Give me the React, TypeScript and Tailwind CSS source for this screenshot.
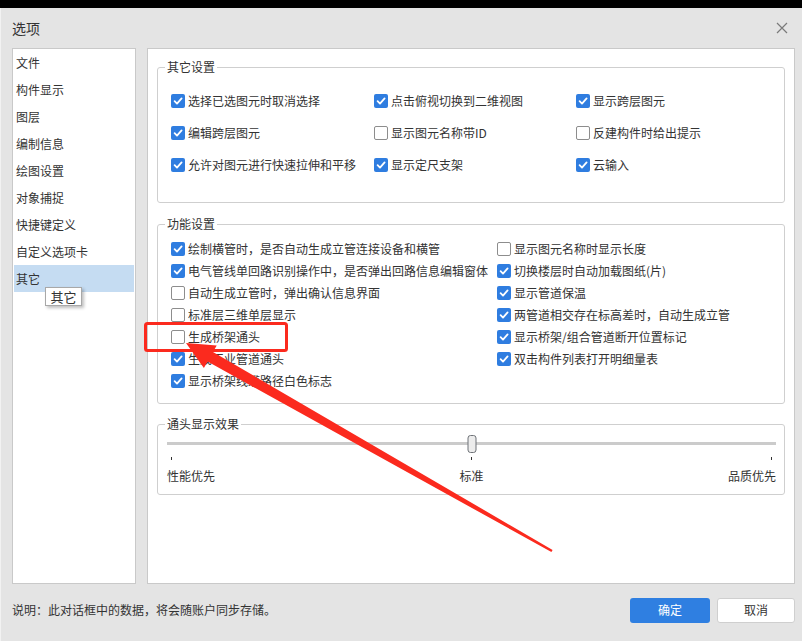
import React from "react";

const navItems = [
  "文件",
  "构件显示",
  "图层",
  "编制信息",
  "绘图设置",
  "对象捕捉",
  "快捷键定义",
  "自定义选项卡",
  "其它",
];

const otherSettings: [string, boolean][] = [
  ["选择已选图元时取消选择", true],
  ["点击俯视切换到二维视图", true],
  ["显示跨层图元", true],
  ["编辑跨层图元", true],
  ["显示图元名称带ID", false],
  ["反建构件时给出提示", false],
  ["允许对图元进行快速拉伸和平移", true],
  ["显示定尺支架", true],
  ["云输入", true],
];

const funcLeft: [string, boolean][] = [
  ["绘制横管时，是否自动生成立管连接设备和横管", true],
  ["电气管线单回路识别操作中，是否弹出回路信息编辑窗体", true],
  ["自动生成立管时，弹出确认信息界面", false],
  ["标准层三维单层显示", false],
  ["生成桥架通头", false],
  ["生成工业管道通头", true],
  ["显示桥架线缆路径白色标志", true],
];

const funcRight: [string, boolean][] = [
  ["显示图元名称时显示长度", false],
  ["切换楼层时自动加载图纸(片)", true],
  ["显示管道保温", true],
  ["两管道相交存在标高差时，自动生成立管", true],
  ["显示桥架/组合管道断开位置标记", true],
  ["双击构件列表打开明细量表", true],
];

const Check = ({ checked }: { checked: boolean }) =>
  checked ? (
    <span className="w-[14px] h-[14px] shrink-0 rounded-[2px] bg-[#2f7de0] flex items-center justify-center">
      <svg width="10" height="10" viewBox="0 0 10 10">
        <path d="M1.6 5.2 L4 7.6 L8.6 2.4" fill="none" stroke="white" strokeWidth="1.8" strokeLinecap="round" strokeLinejoin="round" />
      </svg>
    </span>
  ) : (
    <span className="w-[14px] h-[14px] shrink-0 rounded-[2px] bg-white border border-[#8d8d8d]" />
  );

const Option = ({ label, checked, h }: { label: string; checked: boolean; h: string }) => (
  <div className={`flex items-center gap-[3px] whitespace-nowrap ${h}`}>
    <Check checked={checked} />
    <span>{label}</span>
  </div>
);

const Group = ({ title, className, children }: { title: string; className?: string; children: React.ReactNode }) => (
  <fieldset className={`border border-[#cfcfcf] rounded-[3px] min-w-0 ${className ?? ""}`}>
    <legend className="ml-[7px] px-[2px] leading-4 text-[12px]">{title}</legend>
    {children}
  </fieldset>
);

export default function App() {
  return (
    <div className="relative w-[802px] h-[641px] bg-black flex flex-col overflow-hidden text-[12px] text-[#333] font-['Noto_Sans_CJK_SC','Noto_Sans',sans-serif]">
      <div className="h-2 shrink-0" />
      <div className="flex-1 flex flex-col bg-[#e4e4e4] border-l border-[#f2f2f2] pl-[11px] pr-[7px]">
        {/* title bar */}
        <div className="h-10 shrink-0 flex items-center justify-between">
          <span className="text-[14px] leading-5">选项</span>
          <svg width="12" height="12" viewBox="0 0 12 12" className="mr-[7px]">
            <path d="M1 1 L11 11 M11 1 L1 11" stroke="#7a7a7a" strokeWidth="1.2" />
          </svg>
        </div>

        {/* body */}
        <div className="h-[536px] shrink-0 flex gap-[11px]">
          <div className="w-[124px] shrink-0 bg-white border border-[#c9c9c9] px-px">
            {navItems.map((n) => (
              <div
                key={n}
                className={`h-[27px] flex items-center pl-[2px] leading-4 ${n === "其它" ? "bg-[#c5dcf2]" : ""}`}
              >
                {n}
              </div>
            ))}
          </div>

          <div className="flex-1 bg-white border border-[#c9c9c9] pl-[9px] pr-[9px] pt-[10px]">
            <Group title="其它设置">
              <div className="grid grid-cols-[203px_202px_1fr] pl-[13px] pt-[10px] pb-[21px]">
                {otherSettings.map(([l, c]) => (
                  <Option key={l} label={l} checked={c} h="h-8" />
                ))}
              </div>
            </Group>

            <Group title="功能设置" className="mt-[13px]">
              <div className="grid grid-cols-[326px_1fr] pl-[13px] pt-[6px] pb-[11px]">
                <div className="flex flex-col">
                  {funcLeft.map(([l, c]) => (
                    <Option key={l} label={l} checked={c} h="h-[22px]" />
                  ))}
                </div>
                <div className="flex flex-col">
                  {funcRight.map(([l, c]) => (
                    <Option key={l} label={l} checked={c} h="h-[22px]" />
                  ))}
                </div>
              </div>
            </Group>

            <Group title="通头显示效果" className="mt-[12px]">
              <div className="pl-[9px] pr-[8px] pt-[3px] pb-[10px]">
                <div className="relative h-[18px]">
                  <div className="absolute left-0 right-0 top-[7px] h-[3px] bg-[#cbcbcb]" />
                  <div className="absolute left-1/2 -translate-x-1/2 top-0 w-[9px] h-[18px] rounded-[3px] bg-[#ececec] border border-[#6f7378]" />
                </div>
                <div className="flex justify-between px-[4px] mt-[4px]">
                  <span className="w-px h-[3px] bg-[#333]" />
                  <span className="w-px h-[3px] bg-[#333]" />
                  <span className="w-px h-[3px] bg-[#333]" />
                </div>
                <div className="flex justify-between mt-[8px] leading-4">
                  <span>性能优先</span>
                  <span>标准</span>
                  <span>品质优先</span>
                </div>
              </div>
            </Group>
          </div>
        </div>

        {/* footer */}
        <div className="h-[52px] shrink-0 flex items-center justify-between">
          <span className="leading-4">说明：此对话框中的数据，将会随账户同步存储。</span>
          <div className="flex gap-[7px]">
            <button className="w-[80px] h-[25px] rounded-[3px] bg-[#2f7fe1] text-white text-[12px]">确定</button>
            <button className="w-[78px] h-[25px] rounded-[3px] bg-white border border-[#cfcfcf] text-[12px]">取消</button>
          </div>
        </div>
      </div>

      {/* tooltip */}
      <div className="absolute left-[45px] top-[287px] w-[37px] h-[19px] bg-white border border-[#a8a8a8] shadow-[2px_2px_3px_rgba(0,0,0,0.25)] flex items-center justify-center leading-4 text-[13px]">
        其它
      </div>

      {/* annotation */}
      <svg className="absolute inset-0 pointer-events-none" width="802" height="641" viewBox="0 0 802 641">
        <rect x="145.5" y="323.5" width="141" height="27" rx="2" fill="none" stroke="#fb2a1e" strokeWidth="3" />
        <polygon
          points="186,343 216.7,345.5 213,352 552.6,550 551.4,552 207.6,361.6 203.9,368.1"
          fill="#fb2a1e"
        />
      </svg>
    </div>
  );
}
